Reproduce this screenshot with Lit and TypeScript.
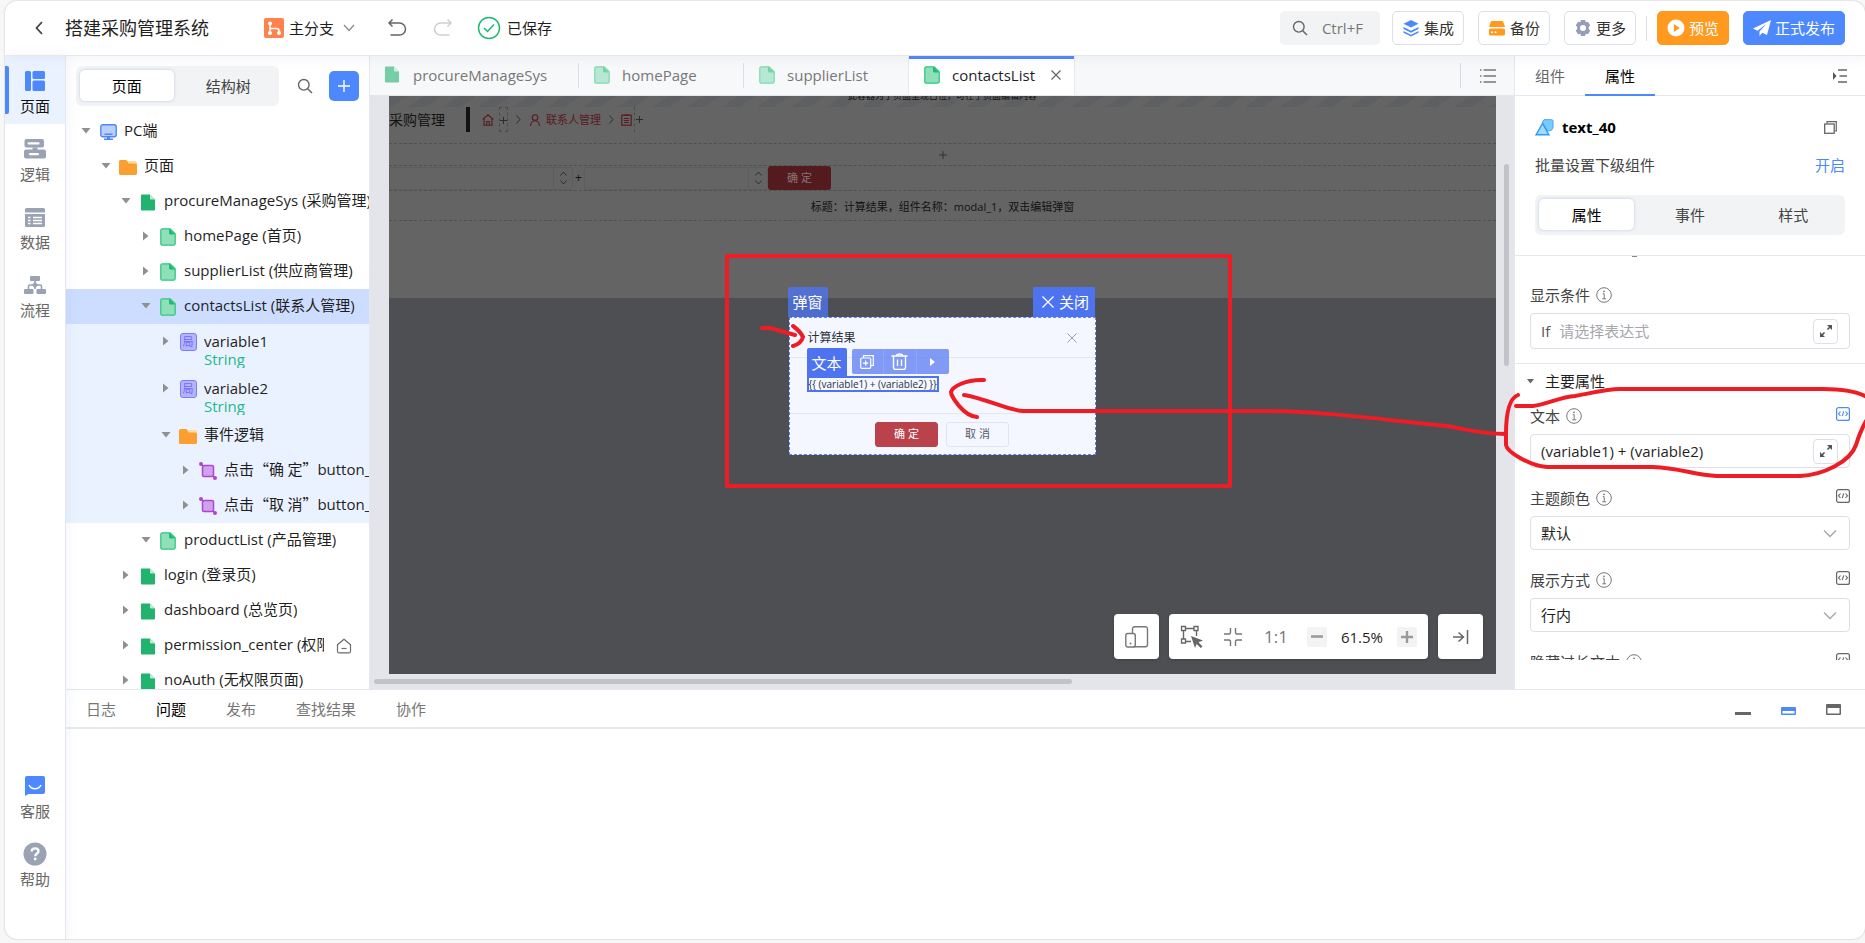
import { LitElement, html, svg, css, nothing, TemplateResult } from "lit";
import { customElement, state } from "lit/decorators.js";
import { classMap } from "lit/directives/class-map.js";
import { styleMap } from "lit/directives/style-map.js";

/* ---------- icon set ---------- */

const icon = (w: number, h: number, body: unknown, cls = "") =>
  html`<svg class=${cls} width=${w} height=${h} viewBox="0 0 ${w} ${h}" fill="none" aria-hidden="true">${body}</svg>`;

const pageSolid = icon(14, 17, svg`<path d="M1 0.5h8l5 5v10.200a0.800 .8 0 0 1-.8 .8H.8a.8 .8 0 0 1-.8-.8V1.300A.8 .8 0 0 1 .8 .5z" fill="#22b36f"/><path d="M9 .5l5 5H9.800a.8 .8 0 0 1-.8-.8z" fill="#bfe9d5"/>`);
const pageLight = icon(16, 18, svg`<path d="M2.200 .8h8l5 5v9.700a1.700 1.700 0 0 1-1.700 1.700H2.500A1.700 1.700 0 0 1 .8 15.500V2.300A1.500 1.500 0 0 1 2.200 .8z" fill="#8edfba" stroke="#35c883" stroke-width="1.300"/><path d="M9 .5l6 6h-4.500A1.500 1.500 0 0 1 9 5z" fill="#1fb970"/>`);
const folder = icon(18, 15, svg`<path d="M8 1h8.500A1.500 1.500 0 0 1 18 2.500V6H8z" fill="#ffd9a6"/><path d="M1.500 0h5.300c.6 0 1 .2 1.300.7L9.500 3.500H16.500A1.500 1.500 0 0 1 18 5v8.500a1.500 1.500 0 0 1-1.500 1.500h-15A1.500 1.500 0 0 1 0 13.500v-12A1.500 1.500 0 0 1 1.500 0z" fill="#fb9f31"/>`);
const monitor = icon(17, 16, svg`<rect x=".8" y=".8" width="15.400" height="12" rx="2" fill="#b9d0ff" stroke="#4f86fb" stroke-width="1.400"/><path d="M4.500 10.200h8M4 15.200h9" stroke="#4f86fb" stroke-width="1.400"/><path d="M7 13h3v2H7z" fill="#4f86fb"/>`);
const localVar = html`<span class="var-badge">局</span>`;
const eventIcon = icon(18, 18, svg`<rect x="3.500" y="3.500" width="11" height="11" rx="1.500" fill="#d3a0ea" stroke="#ab48d3" stroke-width="1.500"/><path d="M1.500 1.500l3 3M13.500 13.500l3 3" stroke="#ab48d3" stroke-width="1.500"/><circle cx="2" cy="2" r="2" fill="#ab48d3"/><circle cx="16" cy="16" r="2" fill="#ab48d3"/>`);
const homeOutline = icon(16, 16, svg`<path d="M1.500 6.800L8 1.300l6.500 5.500v6.500a1.500 1.500 0 0 1-1.500 1.500H3a1.500 1.500 0 0 1-1.500-1.500z" stroke="#6b6b6b" stroke-width="1.200" stroke-linejoin="round"/><path d="M5.500 10.500h5" stroke="#6b6b6b" stroke-width="1.200"/>`);
const caret = (open: boolean) =>
  open ? icon(10, 6, svg`<path d="M.5 0h9L5 5.500z" fill="#8f9092"/>`) : icon(6, 10, svg`<path d="M0 .5v9L5.500 5z" fill="#8f9092"/>`);
const chevron = icon(14, 9, svg`<path d="M1 1.500l6 6 6-6" stroke="#a3a5aa" stroke-width="1.300"/>`);
const search = icon(16, 16, svg`<circle cx="6.800" cy="6.800" r="5.300" stroke="#666" stroke-width="1.400"/><path d="M10.700 10.700L15 15" stroke="#666" stroke-width="1.500"/>`);
const plus = (s: number, c: string, w = 1.4) => icon(s, s, svg`<path d="M${s / 2} 0v${s}M0 ${s / 2}h${s}" stroke=${c} stroke-width=${w}/>`);
const cross = (s: number, c: string, w = 1.2) => icon(s, s, svg`<path d="M.5 .5l${s - 1} ${s - 1}M${s - 0.5} .5L.5 ${s - 0.5}" stroke=${c} stroke-width=${w}/>`);
const info = icon(16, 16, svg`<circle cx="8" cy="8" r="7.300" stroke="#777" stroke-width="1"/><path d="M6.800 6.700h1.400v5M6.300 11.800h3.800" stroke="#777" stroke-width="1"/><circle cx="8" cy="4.300" r=".9" fill="#777"/>`);
const code = (c: string) => icon(14, 14, svg`<rect x=".6" y=".6" width="12.800" height="12.800" rx="2" stroke=${c} stroke-width="1.200"/><path d="M4.500 4.500L2.500 6.800l2 2.200M9.500 4.500l2 2.300-2 2.200M7.700 4.300L6.300 9.200" stroke=${c} stroke-width="1.100"/>`);
const expand = icon(14, 14, svg`<path d="M8 1h5v5zM1 8v5h5z" fill="#555"/><path d="M11.500 2.500L8.500 5.500M5.500 8.500l-3 3" stroke="#555" stroke-width="1.600"/>`);

const railIcons: Record<string, TemplateResult> = {
  page: icon(20, 20, svg`<rect width="6" height="20" rx="1.500" fill="#4d88ff"/><rect x="7.500" width="12.500" height="8" rx="1.500" fill="#4d88ff"/><rect x="7.500" y="9.500" width="12.500" height="10.500" rx="1.500" fill="#4d88ff"/>`),
  logic: icon(22, 20, svg`<rect x=".5" width="19.500" height="8.500" rx="2" fill="#9aa3b3"/><rect x="3.500" y="3.200" width="12" height="2.200" rx="1" fill="#fff"/><path d="M8.500 8.500h5v2.500h-5z" fill="#9aa3b3"/><rect x="0" y="10.500" width="22" height="9" rx="2" fill="#9aa3b3"/><rect x="5" y="14" width="10" height="2.200" rx="1" fill="#fff"/>`),
  data: icon(20, 19, svg`<path d="M1.500 0h17A1.500 1.500 0 0 1 20 1.500V4.500H0V1.500A1.500 1.500 0 0 1 1.500 0z" fill="#9aa3b3"/><path d="M0 6h20v11.500a1.500 1.500 0 0 1-1.500 1.500h-17A1.500 1.500 0 0 1 0 17.500z" fill="#9aa3b3"/><path d="M3 9.500h2.500M3 12.500h2.500M3 15.500h2.500M8 9.500h9M8 12.500h9M8 15.500h9" stroke="#fff" stroke-width="1.300"/>`),
  flow: icon(22, 18, svg`<rect x="6" width="10" height="5" rx="1" fill="#9aa3b3"/><path d="M11 5v8M4.500 13V10.500a1.500 1.500 0 0 1 1.500-1.500h10a1.500 1.500 0 0 1 1.500 1.500V13" stroke="#9aa3b3" stroke-width="1.600"/><path d="M11 5.500l3 3.500-3 3.500L8 9z" fill="#9aa3b3"/><rect y="13" width="9.500" height="5" rx="1" fill="#9aa3b3"/><rect x="12.500" y="13" width="9.500" height="5" rx="1" fill="#9aa3b3"/>`),
  chat: icon(20, 20, svg`<path d="M2 0h16a2 2 0 0 1 2 2v14a2 2 0 0 1-2 2H3.500L0 20V2a2 2 0 0 1 2-2z" fill="#4d88ff"/><path d="M4 9c2.500 5 9.500 5 12 0" stroke="#fff" stroke-width="1.600"/>`),
  help: icon(24, 24, svg`<circle cx="12" cy="12" r="11.500" fill="#9aa3b3"/><path d="M8.700 9.500c0-4.300 6.800-4 6.800-.3 0 2.300-3.300 2.400-3.300 5" stroke="#fff" stroke-width="2.300"/><circle cx="12.200" cy="17" r="1.400" fill="#fff"/>`),
};

/* ---------- data ---------- */

interface TreeRow { level: number; open: boolean; icon: TemplateResult; name: unknown; type?: string; tone?: "current" | "child"; home?: boolean; }

const clickEvent = (quoted: string, n: number) => html`点击<span class="cjk">${quoted}</span>button_${n}`;

const tree: TreeRow[] = [
  { level: 0, open: true, icon: monitor, name: "PC端" },
  { level: 1, open: true, icon: folder, name: "页面" },
  { level: 2, open: true, icon: pageSolid, name: "procureManageSys (采购管理)" },
  { level: 3, open: false, icon: pageLight, name: "homePage (首页)" },
  { level: 3, open: false, icon: pageLight, name: "supplierList (供应商管理)" },
  { level: 3, open: true, icon: pageLight, name: "contactsList (联系人管理)", tone: "current" },
  { level: 4, open: false, icon: localVar, name: "variable1", type: "String", tone: "child" },
  { level: 4, open: false, icon: localVar, name: "variable2", type: "String", tone: "child" },
  { level: 4, open: true, icon: folder, name: "事件逻辑", tone: "child" },
  { level: 5, open: false, icon: eventIcon, name: clickEvent("“确 定”", 1), tone: "child" },
  { level: 5, open: false, icon: eventIcon, name: clickEvent("“取 消”", 2), tone: "child" },
  { level: 3, open: true, icon: pageLight, name: "productList (产品管理)" },
  { level: 2, open: false, icon: pageSolid, name: "login (登录页)" },
  { level: 2, open: false, icon: pageSolid, name: "dashboard (总览页)" },
  { level: 2, open: false, icon: pageSolid, name: "permission_center (权限中心)", home: true },
  { level: 2, open: false, icon: pageSolid, name: "noAuth (无权限页面)" },
];

const tabs = [
  { name: "procureManageSys", icon: pageSolid },
  { name: "homePage", icon: pageLight },
  { name: "supplierList", icon: pageLight },
  { name: "contactsList", icon: pageLight },
];

@customElement("app-root")
export class AppRoot extends LitElement {
  @state() private activeTab = "contactsList";

  static styles = css`
    :host {
      display: block;
      font: 15px/20px "Open Sans", "Noto Sans", "Noto Sans CJK SC", sans-serif;
      color: #1f1f1f;
      background: #f7f7f7;
      height: 100vh;
      min-height: 760px;
      padding: 1px 0 4px 5px;
      box-sizing: border-box;
      position: relative;
      overflow: hidden;
    }
    *, *::before, *::after { box-sizing: border-box; }
    button { font: inherit; color: inherit; border: 0; background: none; padding: 0; margin: 0; cursor: pointer; display: inline-flex; align-items: center; justify-content: center; }
    input, select { font: inherit; color: inherit; border: 0; background: none; margin: 0; padding: 0; min-width: 0; outline: 0; }
    svg { display: block; flex: none; }
    a { text-decoration: none; }
    .cjk { font-family: "Noto Sans CJK SC", sans-serif; }

    .app { height: 100%; display: flex; flex-direction: column; background: #fff; border-radius: 12px; overflow: hidden; box-shadow: 0 0 2px rgba(0, 0, 0, .25); }

    /* header */
    .header { flex: none; height: 55px; display: flex; align-items: center; border-bottom: 1px solid #e6e8ee; padding: 0 20px; position: relative; z-index: 2; box-shadow: 0 2px 12px rgba(100, 120, 170, .08); white-space: nowrap; }
    .back { width: 28px; height: 28px; }
    .title { font-size: 18px; line-height: 26px; font-weight: 400; margin: 0 0 0 12px; }
    .branch { margin-left: 55px; gap: 5px; }
    .branch svg:last-child { margin-left: 4px; }
    .undo { margin-left: 32px; }
    .redo { margin-left: 26px; }
    .saved { display: flex; align-items: center; gap: 6px; margin-left: 24px; }
    .grow { flex: 1; }
    .finder { display: flex; align-items: center; gap: 14px; width: 100px; height: 34px; background: #f1f3f5; border-radius: 5px; padding: 0 8px 0 12px; margin-right: 12px; }
    .finder input { flex: 1; width: 50px; }
    .finder input::placeholder { color: #777; opacity: 1; }
    .actions { display: flex; align-items: center; gap: 14px; }
    .action { height: 34px; padding: 0 9px; gap: 4px; border: 1px solid #dcdfea; border-radius: 5px; color: #333; }
    .action.preview { background: #ff9a1f; border-color: #ff9a1f; color: #fff; }
    .action.publish { background: #4d88ff; border-color: #4d88ff; color: #fff; }
    .rule { width: 1px; height: 25px; background: #dcdfea; margin: 0 10px; }

    /* body */
    .body { flex: 1; display: flex; min-height: 0; }
    .rail { flex: none; width: 61px; border-right: 1px solid #e4e7ed; display: flex; flex-direction: column; padding-bottom: 42px; box-shadow: 2px 0 12px rgba(100, 120, 170, .08); position: relative; z-index: 1; }
    .rail button { height: 68px; width: 100%; flex-direction: column; color: #666; justify-content: flex-start; padding-top: 13px; gap: 3px; }
    .rail .glyph { height: 24px; display: flex; align-items: center; }
    .rail button.on { background: #ebf2ff; color: #111; position: relative; }
    .rail button.on::before { content: ""; position: absolute; left: 0; top: 10px; width: 4px; height: 48px; background: #4d88ff; border-radius: 0 2px 2px 0; }

    .main { flex: 1; min-width: 0; display: flex; flex-direction: column; }
    .work { flex: 1; min-height: 0; display: flex; }

    .segment { display: flex; gap: 8px; background: #f1f3f5; border-radius: 6px; height: 40px; padding: 4px 4px 5px; }
    .segment button { flex: 1; border-radius: 5px; color: #444; }
    .segment button.on { background: #fff; color: #000; box-shadow: 0 0 2px 1px #d9dded; }

    /* tree */
    .tree-panel { flex: none; width: 304px; border-right: 1px solid #e4e7ed; display: flex; flex-direction: column; overflow: hidden; }
    .tree-tools { flex: none; display: flex; align-items: center; padding: 10px 10px 8px; }
    .tree-tools .segment { width: 203px; }
    .tree-tools .find { width: 30px; height: 30px; margin: 0 9px 0 11px; }
    .add { width: 30px; height: 30px; border-radius: 5px; background: #4d88ff; }
    .tree { list-style: none; margin: 0; padding: 0; overflow: hidden; flex: 1; min-height: 0; }
    .row { display: flex; align-items: flex-start; min-height: 35px; padding: 6px 0 0 9px; white-space: nowrap; overflow: hidden; }
    .row.current { background: #cdddff; }
    .row.child { background: #ebf2ff; }
    .row.typed { height: 47px; line-height: 18px; padding-top: 8px; }
    .row .arrow { flex: none; width: 22px; height: 22px; display: flex; align-items: center; justify-content: center; }
    .row .kind { flex: none; width: 22px; height: 24px; display: flex; align-items: center; justify-content: center; margin-right: 5px; }
    .row.typed .kind { height: 20px; }
    .row.typed .arrow { height: 18px; }
    .row .name { overflow: hidden; }
    .row.has-home .name { width: 160px; }
    .row .home { margin: 4px 0 0 12px; }
    .type { display: block; color: #22b88f; }
    .var-badge { width: 17px; height: 18px; border: 1px solid #7d7bff; border-radius: 3px; background: #b3b4ff; color: #6f6bf5; font-size: 11px; line-height: 16px; text-align: center; }

    /* centre */
    .centre { flex: 1; min-width: 0; display: flex; flex-direction: column; position: relative; }
    .tabbar { flex: none; height: 40px; display: flex; align-items: stretch; background: #f7f8fa; border-bottom: 1px solid #e4e7ed; color: #777; }
    .tab { min-width: 165px; padding: 0 12px 5px 15px; display: flex; align-items: center; position: relative; border-top: 3px solid transparent; }
    .tab::after { content: ""; position: absolute; right: 0; top: 4px; height: 25px; width: 1px; background: #dcdfe8; }
    .tab .kind { width: 16px; margin-right: 12px; opacity: .6; }
    .tab .label { margin-right: 8px; }
    .tab .close { width: 12px; height: 20px; margin-left: auto; visibility: hidden; }
    .tab.before::after { display: none; }
    .tab.on { background: #fff; color: #1f1f1f; border-top-color: #4d88ff; box-shadow: 0 0 0 1px #e8eaf0; }
    .tab.on::after { display: none; }
    .tab.on .kind { opacity: 1; }
    .tab.on .close { visibility: visible; }
    .tablist { margin: 7px 0; margin-left: auto; width: 54px; border-left: 1px solid #d6d9e2; }

    .canvas { flex: 1; min-height: 0; background: #e4e5eb; padding: 0 18px 15px 19px; position: relative; }
    .stage { height: 100%; background: #4e4f53; position: relative; overflow: hidden; color: #121212; }
    .sheet { height: 202px; background: #646464; }
    .hatch { height: 11px; overflow: hidden; display: flex; justify-content: center; font-size: 9px; line-height: 12px; background: repeating-linear-gradient(145deg, #5d5f62 0 10px, #646464 10px 20px); }
    .hatch span { margin-top: -6px; }
    .crumbs { height: 36px; display: flex; align-items: flex-start; font-size: 11px; line-height: 25px; color: #571b20; }
    .crumbs .brand { font-size: 14px; color: #121212; width: 77px; white-space: nowrap; }
    .crumbs .bar { width: 4px; height: 25px; background: #121212; margin-right: 12px; }
    .crumbs svg { margin-top: 7px; }
    .crumbs .slot { width: 9px; height: 25px; border: 1px dashed #4b4b4b; margin: 0 5px; display: flex; justify-content: center; }
    .crumbs .slot.last { margin-left: 2px; border-width: 0 0 0 1px; }
    .crumbs .slot svg { margin-top: 9px; }
    .crumbs .sep { margin: 8px 8px 0 3px; }
    .crumbs .text { margin: 0 8px 0 5px; }
    .crumbs .sep.mid { margin: 8px 7px 0 0; }
    .band { border-top: 1px dashed #505050; display: flex; align-items: center; justify-content: center; font-size: 11px; line-height: 16px; }
    .band.plus { height: 22px; }
    .band.form { height: 25px; justify-content: flex-start; }
    .band.note { height: 31px; border-bottom: 1px dashed #505050; padding-top: 2px; }
    .stepper { width: 184px; height: 23px; border: 1px solid #5d5d5d; border-radius: 3px; display: flex; }
    .stepper input { flex: 1; padding: 0 6px; }
    .stepper .arrows { width: 19px; border-left: 1px solid #5d5d5d; display: flex; flex-direction: column; align-items: center; justify-content: space-evenly; }
    .op { width: 11px; text-align: center; font-size: 12px; }
    .confirm-dim { width: 63px; height: 24px; border-radius: 3px; background: #541b1f; color: #8a7476; }

    .modal { position: absolute; top: 221px; left: calc(50% - 154px); width: 307px; background: #f4f7ff; border: 1px dashed #5d80ee; color: #2b2f3a; font-size: 12px; }
    .modal-head { height: 40px; border-bottom: 1px solid #e3e7f0; padding: 0 18px; display: flex; align-items: center; justify-content: space-between; }
    .modal-body { height: 56px; padding: 18px 17px; border-bottom: 1px solid #e3e7f0; display: flex; align-items: flex-start; }
    .picked { border: 2px solid #4d74ee; font-size: 10px; line-height: 12px; height: 16px; white-space: nowrap; }
    .modal-foot { height: 40px; display: flex; justify-content: center; align-items: center; gap: 8px; font-size: 11px; }
    .modal-foot button { width: 63px; height: 25px; border-radius: 3px; border: 1px solid #e0e4ee; color: #555b68; }
    .modal-foot button.ok { background: #ba424c; border-color: #ba424c; color: #fff; }
    .tag { position: absolute; height: 30px; display: flex; align-items: center; justify-content: center; color: #fff; background: #4d74ee; font-size: 15px; border-radius: 2px 2px 0 0; }
    .tag.dialog { left: -2px; top: -31px; width: 40px; background: rgba(77, 116, 238, .8); }
    .tag.shut { right: 0; top: -31px; width: 62px; gap: 5px; padding-left: 4px; }
    .tag.text { left: 17px; top: 30px; width: 40px; }
    .ops { position: absolute; left: 62px; top: 31px; height: 25px; display: flex; background: rgba(95, 128, 242, .78); border-radius: 2px; }
    .ops button { width: 33px; border-left: 1px solid #8ea6f6; }
    .ops button:first-child { border-left: 0; width: 31px; }

    .dock { position: absolute; right: 31px; bottom: 30px; display: flex; gap: 10px; height: 45px; }
    .dock > * { background: #fff; border-radius: 4px; min-width: 45px; box-shadow: 0 1px 3px rgba(0, 0, 0, .2); }
    .zoom { display: flex; align-items: center; width: 259px; padding: 0 11px; color: #555; }
    .zoom .pick { width: 24px; margin-right: 19px; }
    .zoom .fit { width: 20px; margin-right: 18px; }
    .zoom .actual { width: 30px; margin-right: 16px; color: #777; font-size: 17px; }
    .zoom .step { width: 20px; height: 20px; background: #f3f3f3; border-radius: 2px; }
    .zoom output { flex: 1; text-align: center; color: #1f1f1f; font-size: 15px; }
    .thumb { position: absolute; background: #c1c3c8; border-radius: 3px; }
    .thumb.v { right: 5px; top: 68px; width: 5px; height: 202px; }
    .thumb.h { left: 4px; bottom: 5px; height: 5px; width: 61%; }

    /* properties */
    .props { flex: none; width: 351px; border-left: 1px solid #e4e7ed; display: flex; flex-direction: column; }
    .ptabs { flex: none; height: 40px; display: flex; border-bottom: 1px solid #e4e7ed; color: #666; padding-right: 17px; }
    .ptabs button { width: 70px; padding-top: 2px; border-bottom: 2px solid transparent; margin-bottom: -1px; position: relative; }
    .ptabs button.on { color: #000; border-color: #4d88ff; }
    .ptabs .fold { margin-left: auto; width: 16px; }
    .phead { flex: none; padding: 20px 20px 20px; border-bottom: 1px solid #e4e7ed; }
    .who { display: flex; align-items: center; gap: 8px; font-weight: 700; color: #000; height: 22px; }
    .who svg:last-child { margin-left: auto; margin-right: 8px; }
    .batch { display: flex; justify-content: space-between; margin: 17px 0 20px; color: #444; }
    .batch a { color: #4d88ff; }
    .fields { flex: 1; min-height: 0; overflow: hidden; margin-bottom: 29px; padding: 0 15px; }
    .stub { height: 1px; width: 5px; background: #888; margin-left: 102px; }
    .field-label { display: flex; align-items: center; height: 20px; gap: 6px; color: #444; margin: 20px 0 8px; }
    .field-label .code { margin: 0 0 4px auto; width: 14px; height: 14px; }
    .field-label.first { margin-top: 28px; }
    .field-label.tight { margin-top: 14px; }
    .box { display: flex; align-items: center; width: 100%; height: 34px; border: 1px solid #dcdfea; border-radius: 4px; padding: 0 11px 0 10px; }
    .box.tall { height: 36px; gap: 9px; color: #555; }
    .box input { flex: 1; }
    .box input::placeholder { color: #a5a7ad; opacity: 1; }
    .grow-btn { width: 25px; height: 25px; border: 1px solid #dcdfea; border-radius: 4px; }
    .pick-box { display: grid; align-items: center; }
    .pick-box > * { grid-area: 1 / 1; }
    .pick-box select { appearance: none; width: 100%; height: 34px; border: 1px solid #dcdfea; border-radius: 4px; padding: 0 30px 0 10px; }
    .pick-box svg { justify-self: end; margin-right: 13px; pointer-events: none; }
    .group { display: flex; align-items: center; gap: 11px; margin: 14px -15px 0; padding: 6px 11px 0 12px; border-top: 1px solid #e4e7ed; height: 29px; color: #1f1f1f; }

    /* console */
    .console { flex: none; height: 250px; border-top: 1px solid #e4e7ed; }
    .console-bar { height: 39px; border-bottom: 2px solid #e8eaf0; display: flex; align-items: center; padding: 0 24px 0 20px; gap: 40px; color: #777; }
    .console-bar .on { color: #000; }
    .window { display: flex; gap: 30px; margin-left: auto; align-items: flex-end; height: 13px; }

    .marks { position: absolute; left: 0; top: 0; z-index: 5; pointer-events: none; }
  `;

  private header() {
    return html`<header class="header">
      <button class="back" aria-label="返回">${icon(8, 14, svg`<path d="M7 1L1.500 7 7 13" stroke="#444" stroke-width="1.800"/>`)}</button>
      <h1 class="title">搭建采购管理系统</h1>
      <button class="branch">
        ${icon(20, 20, svg`<rect width="20" height="20" rx="2" fill="#ff824d"/><circle cx="6" cy="5.500" r="2" fill="#fff"/><circle cx="6" cy="15" r="2" fill="#fff"/><circle cx="15" cy="15" r="2" fill="#fff"/><path d="M6 5v10M6 10.500h6.500A2.500 2.500 0 0 1 15 13v2" stroke="#fff" stroke-width="1.500"/>`)}
        主分支 ${icon(12, 8, svg`<path d="M1 1l5 5.500L11 1" stroke="#8b8d92" stroke-width="1.300"/>`)}
      </button>
      <button class="undo" aria-label="撤销">${icon(20, 20, svg`<path d="M5.500 1.500L2 5l3.500 3.500M2.500 5H12.500a5.700 5.700 0 0 1 0 12H3.500" stroke="#666" stroke-width="1.500"/>`)}</button>
      <button class="redo" aria-label="重做">${icon(20, 20, svg`<path d="M14.500 1.500L18 5l-3.500 3.500M17.500 5H7.500a5.700 5.700 0 0 0 0 12h9" stroke="#cfcfcf" stroke-width="1.500"/>`)}</button>
      <span class="saved">${icon(24, 24, svg`<circle cx="12" cy="12" r="10.500" stroke="#1fb970" stroke-width="1.500"/><path d="M7 12l3.500 3.500L17 8.500" stroke="#1fb970" stroke-width="1.500"/>`)}已保存</span>
      <span class="grow"></span>
      <label class="finder">${search}<input type="text" aria-label="搜索" placeholder="Ctrl+F" /></label>
      <div class="actions">
        <button class="action">${icon(18, 18, svg`<path d="M9 1l7.500 3.700L9 8.500 1.500 4.700z" fill="#4d88ff"/><path d="M1.500 8L9 11.700 16.500 8v2L9 13.700 1.500 10zM1.500 12L9 15.700 16.500 12v1.800L9 17.500 1.500 13.800z" fill="#4d88ff"/>`)}集成</button>
        <button class="action">${icon(18, 18, svg`<path d="M4 2h10a1.500 1.500 0 0 1 1.400 1L17 8H1l1.600-5A1.500 1.500 0 0 1 4 2z" fill="#ff9a1f"/><rect x="1" y="9.500" width="16" height="7" rx="1.500" fill="#ff9a1f"/><circle cx="4" cy="13.200" r="1" fill="#fff"/><circle cx="7.500" cy="13.200" r="1" fill="#fff"/>`)}备份</button>
        <button class="action">${icon(18, 18, svg`<path d="M7 1h4l.7 2.300 2.200-.6 2.300 3.500L14.800 8v2l1.400 1.800-2.300 3.500-2.200-.6L11 17H7l-.7-2.300-2.200.6-2.300-3.500L3.200 10V8L1.800 6.200l2.300-3.500 2.200.6z" fill="#959dbb"/><circle cx="9" cy="9" r="3" fill="#fff"/>`)}更多</button>
      </div>
      <span class="rule"></span>
      <div class="actions">
        <button class="action preview">${icon(18, 18, svg`<circle cx="9" cy="9" r="8.500" fill="#fff"/><path d="M6.800 5v8l6-4z" fill="#ff9a1f"/>`)}预览</button>
        <button class="action publish">${icon(18, 18, svg`<path d="M18 1L0 9.500l4.500 2.200L13.500 5 6.500 12.500V17l2.800-3.200 4.700 2.200z" fill="#fff"/>`)}正式发布</button>
      </div>
    </header>`;
  }

  private railButton(key: string, label: string, on = false) {
    return html`<button class=${classMap({ on })}><span class="glyph">${railIcons[key]}</span>${label}</button>`;
  }

  private treeRow(r: TreeRow) {
    const cls = { row: true, current: r.tone === "current", child: r.tone === "child", typed: !!r.type, "has-home": !!r.home };
    return html`<li class=${classMap(cls)} style=${styleMap({ paddingLeft: `${9 + r.level * 20}px` })}>
      <span class="arrow">${caret(r.open)}</span><span class="kind">${r.icon}</span>
      <span class="name">${r.name}${r.type ? html`<span class="type">${r.type}</span>` : nothing}</span>
      ${r.home ? html`<span class="home">${homeOutline}</span>` : nothing}
    </li>`;
  }

  private stepper(label: string) {
    return html`<div class="stepper"><input aria-label=${label} /><span class="arrows">
      ${icon(7, 5, svg`<path d="M.5 4.500l3-3.500 3 3.500" stroke="#2e2e2e"/>`)}${icon(7, 5, svg`<path d="M.5 .5l3 3.500 3-3.500" stroke="#2e2e2e"/>`)}</span></div>`;
  }

  private stage() {
    const sep = (c: string) => icon(5, 9, svg`<path d="M.5 .5l3.500 4-3.500 4" stroke="#2c2c2c"/>`, c);
    return html`<div class="stage">
      <div class="sheet">
        <div class="hatch"><span>此容器为子页面呈现占位，可在子页面编辑内容</span></div>
        <div class="crumbs">
          <span class="brand">采购管理</span><span class="bar"></span>
          ${icon(12, 12, svg`<path d="M.8 5.500L6 .8l5.200 4.700M2 5v6.300h8V5M4.700 11V7.500h2.600V11" stroke="#571b20" stroke-width="1.100"/>`)}
          <span class="slot">${plus(7, "#2c2c2c", 1)}</span>${sep("sep")}
          ${icon(12, 12, svg`<circle cx="6" cy="3.500" r="2.800" stroke="#571b20" stroke-width="1.100"/><path d="M1.500 12c0-7 9-7 9 0" stroke="#571b20" stroke-width="1.100"/>`)}
          <span class="text">联系人管理</span>${sep("sep mid")}
          ${icon(11, 12, svg`<rect x=".8" y="1.200" width="9.400" height="10" stroke="#571b20" stroke-width="1.200"/><path d="M3 1h5M3 4.500h5M3 6.500h5M3 8.500h5" stroke="#571b20" stroke-width="1.200"/>`)}
          <span class="slot last">${plus(7, "#2c2c2c", 1)}</span>
        </div>
        <div class="band plus">${plus(8, "#333", 1)}</div>
        <div class="band form">
          ${this.stepper("数值一")}<span class="op">+</span>${this.stepper("数值二")}
          <button class="confirm-dim">确 定</button>
        </div>
        <div class="band note">标题：计算结果，组件名称：modal_1，双击编辑弹窗</div>
      </div>
      <div class="modal" role="dialog" aria-label="计算结果">
        <div class="modal-head"><span>计算结果</span>${cross(10, "#9a9fab", 1)}</div>
        <div class="modal-body"><span class="picked">{{ (variable1) + (variable2) }}</span></div>
        <div class="modal-foot"><button class="ok">确 定</button><button>取 消</button></div>
        <span class="tag dialog">弹窗</span>
        <button class="tag shut">${cross(12, "#fff", 1.3)}关闭</button>
        <span class="tag text">文本</span>
        <div class="ops">
          <button aria-label="复制">${icon(14, 14, svg`<path d="M3.500 3V.700h9.800v9.800H11" stroke="#fff" stroke-width="1.200"/><rect x=".7" y="3" width="10" height="10.300" rx="1" stroke="#fff" stroke-width="1.200"/><path d="M5.700 5.500v5.200M3 8.200h5.300" stroke="#fff" stroke-width="1.200"/>`)}</button>
          <button aria-label="删除">${icon(17, 17, svg`<path d="M.5 3h16M5.500 2.500c0-2 6-2 6 0M2.500 3v11.500a2 2 0 0 0 2 2h8a2 2 0 0 0 2-2V3M6.500 6.500v6.500M10.500 6.500v6.500" stroke="#fff" stroke-width="1.400"/>`)}</button>
          <button aria-label="展开">${icon(5, 8, svg`<path d="M0 0l5 4-5 4z" fill="#fff"/>`)}</button>
        </div>
      </div>
    </div>`;
  }

  private centre() {
    const idx = tabs.findIndex((t) => t.name === this.activeTab);
    return html`<section class="centre">
      <div class="tabbar" role="tablist">
        ${tabs.map((t, i) => html`<div class=${classMap({ tab: true, on: i === idx, before: i === idx - 1 })}
          role="tab" @click=${() => (this.activeTab = t.name)}>
          <span class="kind">${t.icon}</span><span class="label">${t.name}</span>
          <button class="close" aria-label="关闭">${cross(10, "#666")}</button></div>`)}
        <button class="tablist" aria-label="标签列表">${icon(16, 14, svg`<path d="M3.500 1H16M3.500 7H16M3.500 13H16M0 1h1.500M0 7h1.500M0 13h1.500" stroke="#777" stroke-width="1.300"/>`)}</button>
      </div>
      <div class="canvas">
        ${this.stage()}
        <div class="dock">
          <button aria-label="设备">${icon(24, 22, svg`<path d="M7.500 7V2.800A2 2 0 0 1 9.500 .8h11a2 2 0 0 1 2 2v16a2 2 0 0 1-2 2H8" stroke="#777" stroke-width="1.400"/><rect x=".8" y="7.500" width="9.500" height="13.500" rx="2" stroke="#777" stroke-width="1.400"/><circle cx="5.500" cy="17.500" r="1" fill="#777"/>`)}</button>
          <div class="zoom">
            <button class="pick" aria-label="框选">${icon(24, 24, svg`<path d="M6 3.500h8M3.500 6v8M16.500 6v5M6 16.500h5" stroke="#666" stroke-width="1.400"/><path d="M1.500 1.500h4v4h-4zM14 1.500h4v4h-4zM1.500 14h4v4h-4z" stroke="#666" stroke-width="1.300"/><path d="M11 11l12 4.500-4.500 1.700 4 4.300-1.700 1.600-4.200-4.200L15 23z" fill="#666"/>`)}</button>
            <button class="fit" aria-label="适应">${icon(18, 18, svg`<path d="M6.500 0v4.500a1.500 1.500 0 0 1-1.500 1.500H0M11.500 0v4.500a1.500 1.500 0 0 0 1.500 1.500h5M6.500 18v-4.500A1.500 1.500 0 0 0 5 12H0M11.500 18v-4.500a1.500 1.500 0 0 1 1.500-1.500h5" stroke="#777" stroke-width="1.400"/>`)}</button>
            <button class="actual">1:1</button>
            <button class="step" aria-label="缩小">${icon(12, 3, svg`<path d="M0 1.500h12" stroke="#999" stroke-width="2.500"/>`)}</button>
            <output>61.5%</output>
            <button class="step" aria-label="放大">${plus(12, "#999", 2.4)}</button>
          </div>
          <button aria-label="收起">${icon(16, 14, svg`<path d="M0 7h10M5.500 2.500L10.500 7l-5 4.500M14.500 0v14" stroke="#666" stroke-width="1.500"/>`)}</button>
        </div>
        <span class="thumb v"></span><span class="thumb h"></span>
      </div>
    </section>`;
  }

  private fieldLabel(forId: string, text: string, cls = "", codeColor = "#666") {
    return html`<div class="field-label ${cls}"><label for=${forId}>${text}</label>${info}
      ${codeColor ? html`<button class="code" aria-label="绑定表达式">${code(codeColor)}</button>` : nothing}</div>`;
  }

  private props() {
    return html`<aside class="props">
      <div class="ptabs"><button>组件</button><button class="on">属性</button>
        <button class="fold" aria-label="收起面板">${icon(14, 14, svg`<path d="M0 3v8l3.500-4z" fill="#555"/><path d="M5 1h9M6.500 7H14M5 13h9" stroke="#666" stroke-width="1.300"/>`)}</button></div>
      <div class="phead">
        <div class="who">${icon(19, 17, svg`<path d="M9 .7h7.500A1.500 1.500 0 0 1 18 2.200V8c0 3-3 4.500-6 3.500L7.500 3z" fill="#7ccbff" stroke="#38a6f8"/><path d="M7.500 4.500L14 15.800H1z" fill="#a5dafe" stroke="#2f9df5" stroke-width="1.400"/>`)}<span>text_40</span>
          ${icon(13, 13, svg`<path d="M3 2.500V.7h9.300V10H10.500" stroke="#666" stroke-width="1.200"/><rect x=".7" y="3" width="9.500" height="9.300" stroke="#666" stroke-width="1.300"/>`)}</div>
        <div class="batch"><span>批量设置下级组件</span><a href="#">开启</a></div>
        <div class="segment"><button class="on">属性</button><button>事件</button><button>样式</button></div>
      </div>
      <div class="fields">
        <div class="stub"></div>
        ${this.fieldLabel("cond", "显示条件", "first", "")}
        <div class="box tall"><span>If</span><input id="cond" placeholder="请选择表达式" /><button class="grow-btn" aria-label="展开">${expand}</button></div>
        <div class="group">${icon(7, 5, svg`<path d="M0 0h7L3.500 4.500z" fill="#666"/>`)}主要属性</div>
        ${this.fieldLabel("text", "文本", "tight", "#4d88ff")}
        <div class="box"><input id="text" .value=${"(variable1) + (variable2)"} /><button class="grow-btn" aria-label="展开">${expand}</button></div>
        ${this.fieldLabel("theme", "主题颜色")}
        <div class="pick-box"><select id="theme"><option>默认</option></select>${chevron}</div>
        ${this.fieldLabel("display", "展示方式")}
        <div class="pick-box"><select id="display"><option>行内</option></select>${chevron}</div>
        ${this.fieldLabel("overflow", "隐藏过长文本")}
        <input id="overflow" type="checkbox" />
      </div>
    </aside>`;
  }

  private console() {
    return html`<section class="console"><div class="console-bar">
      <button>日志</button><button class="on">问题</button><button>发布</button><button>查找结果</button><button>协作</button>
      <div class="window">
        <button aria-label="最小化">${icon(16, 3, svg`<rect width="16" height="3" fill="#666"/>`)}</button>
        <button aria-label="半屏">${icon(15, 8, svg`<rect width="15" height="8" rx="1" fill="#4d88ff"/><rect x="1.500" y="4" width="12" height="2.500" fill="#fff"/>`)}</button>
        <button aria-label="全屏">${icon(15, 11, svg`<rect width="15" height="11" rx="1" fill="#666"/><rect x="1.500" y="4" width="12" height="5.500" fill="#fff"/>`)}</button>
      </div></div></section>`;
  }

  render() {
    return html`<div class="app">
        ${this.header()}
        <div class="body">
          <nav class="rail">
            ${this.railButton("page", "页面", true)}${this.railButton("logic", "逻辑")}${this.railButton("data", "数据")}${this.railButton("flow", "流程")}
            <span class="grow"></span>
            ${this.railButton("chat", "客服")}${this.railButton("help", "帮助")}
          </nav>
          <div class="main">
            <div class="work">
              <section class="tree-panel">
                <div class="tree-tools">
                  <div class="segment"><button class="on">页面</button><button>结构树</button></div>
                  <button class="find" aria-label="搜索">${search}</button><button class="add" aria-label="新增">${plus(12, "#fff")}</button>
                </div>
                <ul class="tree">${tree.map((r) => this.treeRow(r))}</ul>
              </section>
              ${this.centre()} ${this.props()}
            </div>
            ${this.console()}
          </div>
        </div>
      </div>
      <svg class="marks" width="1865" height="943" viewBox="0 0 1865 943" fill="none" stroke="#ee1c24" stroke-width="4" stroke-linecap="round" stroke-linejoin="round" aria-hidden="true">
        <path d="M727 256H1230V486H727z"/>
        <path d="M762 328H770L795 335M793 326Q800 331 803 337Q801 344 793 346"/>
        <path d="M984 380C966 379 952 387 951 392C951 396 963 416 977 417M964 395C984 398 1010 411 1023 411H1260C1330 411 1400 422 1447 426C1470 430 1480 434 1506 434"/>
        <path d="M1518 395C1510 398 1506 410 1506 434V445C1507 452 1530 466 1547 467H1653C1680 468 1694 475 1717 476H1800C1823 475 1850 462 1856 445C1859 435 1862 428 1866 421"/>
        <path d="M1516 406H1533C1548 404 1560 397 1575 396C1593 393 1605 389 1620 389H1823C1845 389 1858 392 1867 397"/>
      </svg>`;
  }
}
